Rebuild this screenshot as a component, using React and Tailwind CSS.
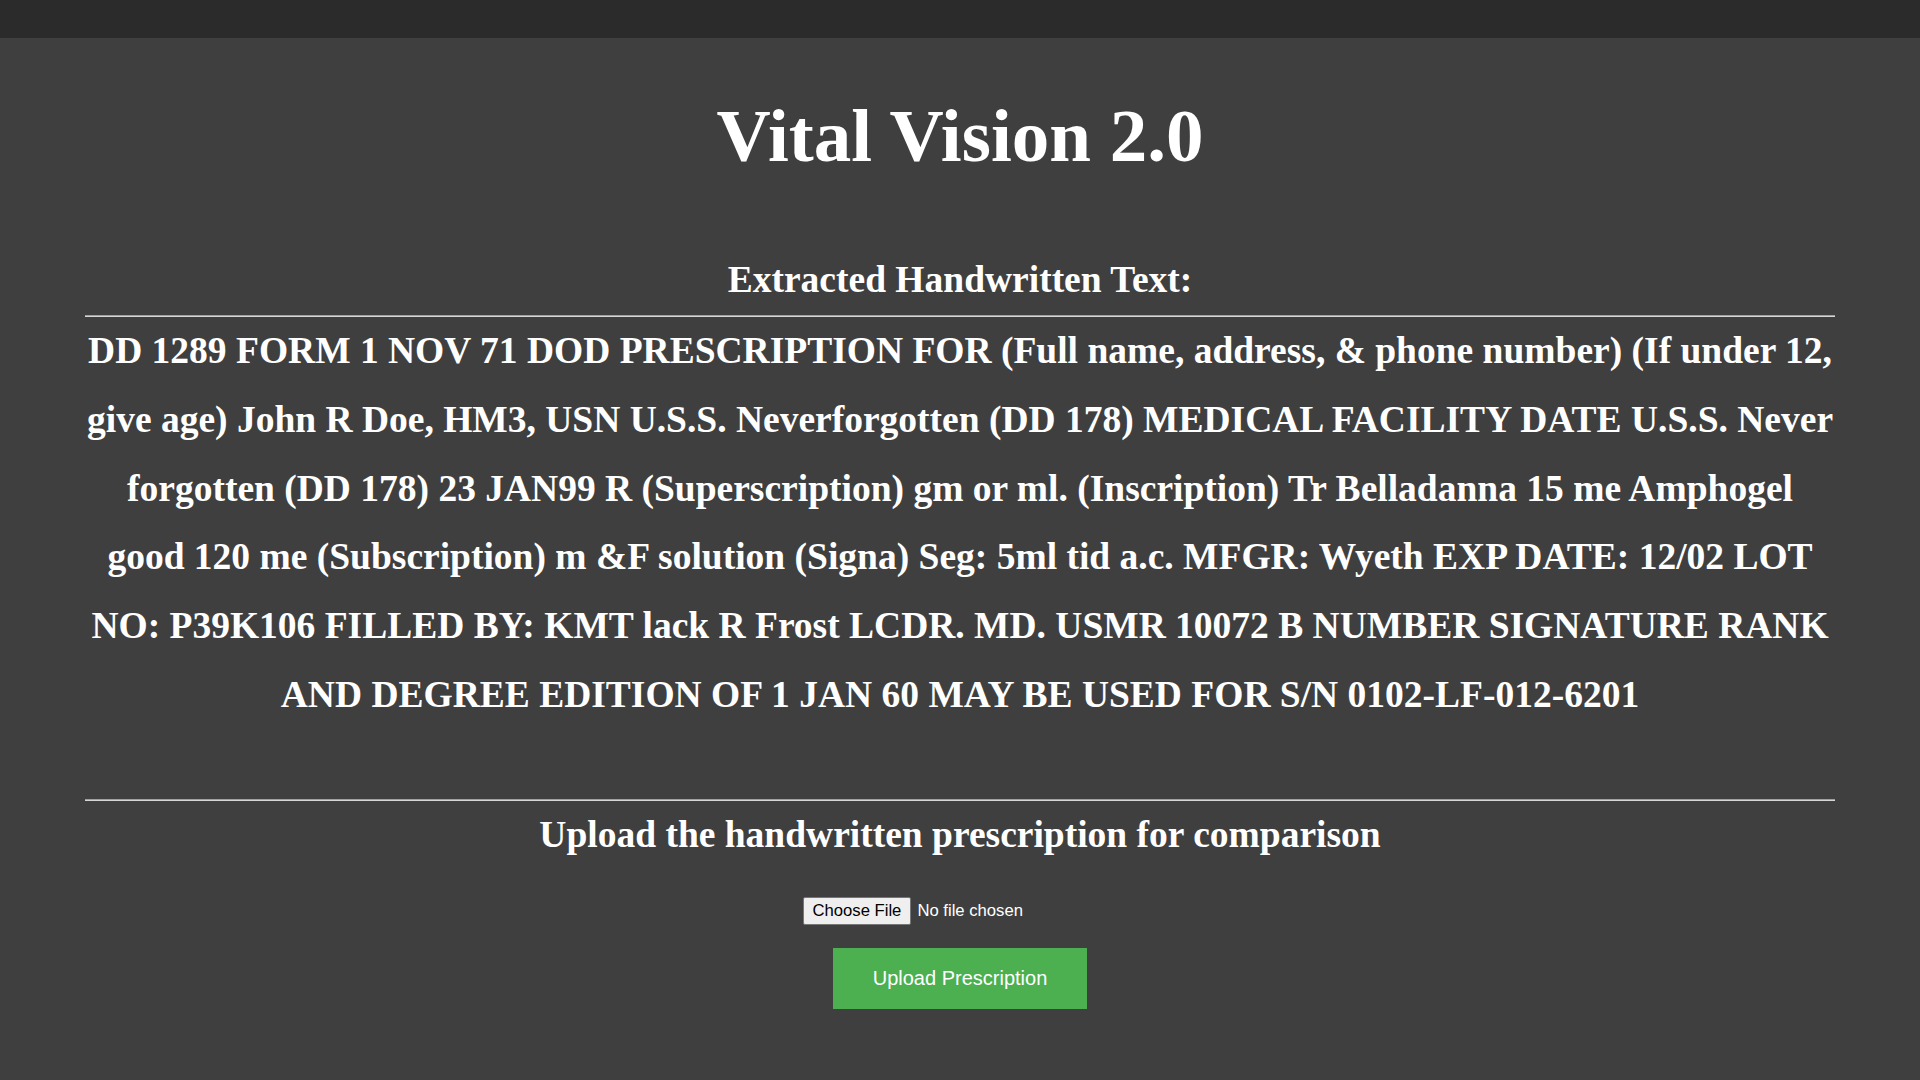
export default function App() {
  const extracted =
    "DD 1289 FORM 1 NOV 71 DOD PRESCRIPTION FOR (Full name, address, & phone number) (If under 12, give age) John R Doe, HM3, USN U.S.S. Neverforgotten (DD 178) MEDICAL FACILITY DATE U.S.S. Never forgotten (DD 178) 23 JAN99 R (Superscription) gm or ml. (Inscription) Tr Belladanna 15 me Amphogel good 120 me (Subscription) m &F solution (Signa) Seg: 5ml tid a.c. MFGR: Wyeth EXP DATE: 12/02 LOT NO: P39K106 FILLED BY: KMT lack R Frost LCDR. MD. USMR 10072 B NUMBER SIGNATURE RANK AND DEGREE EDITION OF 1 JAN 60 MAY BE USED FOR S/N 0102-LF-012-6201";

  return (
    <div className="min-h-screen bg-[#3f3f3f] text-white font-['Liberation_Serif','Times_New_Roman',serif]">
      {/* top bar */}
      <div className="h-[38px] bg-[#2b2b2b]" />

      <div className="w-[1750px] mx-auto text-center">
        <h1 className="mt-[56px] text-[75px] leading-[83px] font-bold">
          Vital Vision 2.0
        </h1>

        {/* extracted text */}
        <h2 className="mt-[81px] text-[37.5px] leading-[43px] font-bold">
          Extracted Handwritten Text:
        </h2>
        <hr className="mt-[14px] h-0 border-t border-b border-t-[#a0a0a0] border-b-[#d6d6d6]" />
        <p className="text-[37.5px] leading-[68.75px] font-bold">{extracted}</p>

        {/* upload */}
        <hr className="mt-[69px] h-0 border-t border-b border-t-[#a0a0a0] border-b-[#d6d6d6]" />
        <h2 className="mt-[12px] text-[37.5px] leading-[43px] font-bold">
          Upload the handwritten prescription for comparison
        </h2>

        <form className="flex flex-col items-center mt-[41px]">
          <input
            type="file"
            className="h-[28px] text-[16.67px] leading-[26px] font-['Liberation_Sans',Arial,sans-serif] text-white file:h-[28px] file:px-[9px] file:mr-[6px] file:bg-[#efefef] file:text-black file:border file:border-[#767676] file:rounded-[2px]"
          />
          <button
            type="button"
            className="mt-[23px] h-[61px] px-[40px] bg-[#4caf50] text-white text-[20px] font-['Liberation_Sans',Arial,sans-serif]"
          >
            Upload Prescription
          </button>
        </form>
      </div>
    </div>
  );
}
